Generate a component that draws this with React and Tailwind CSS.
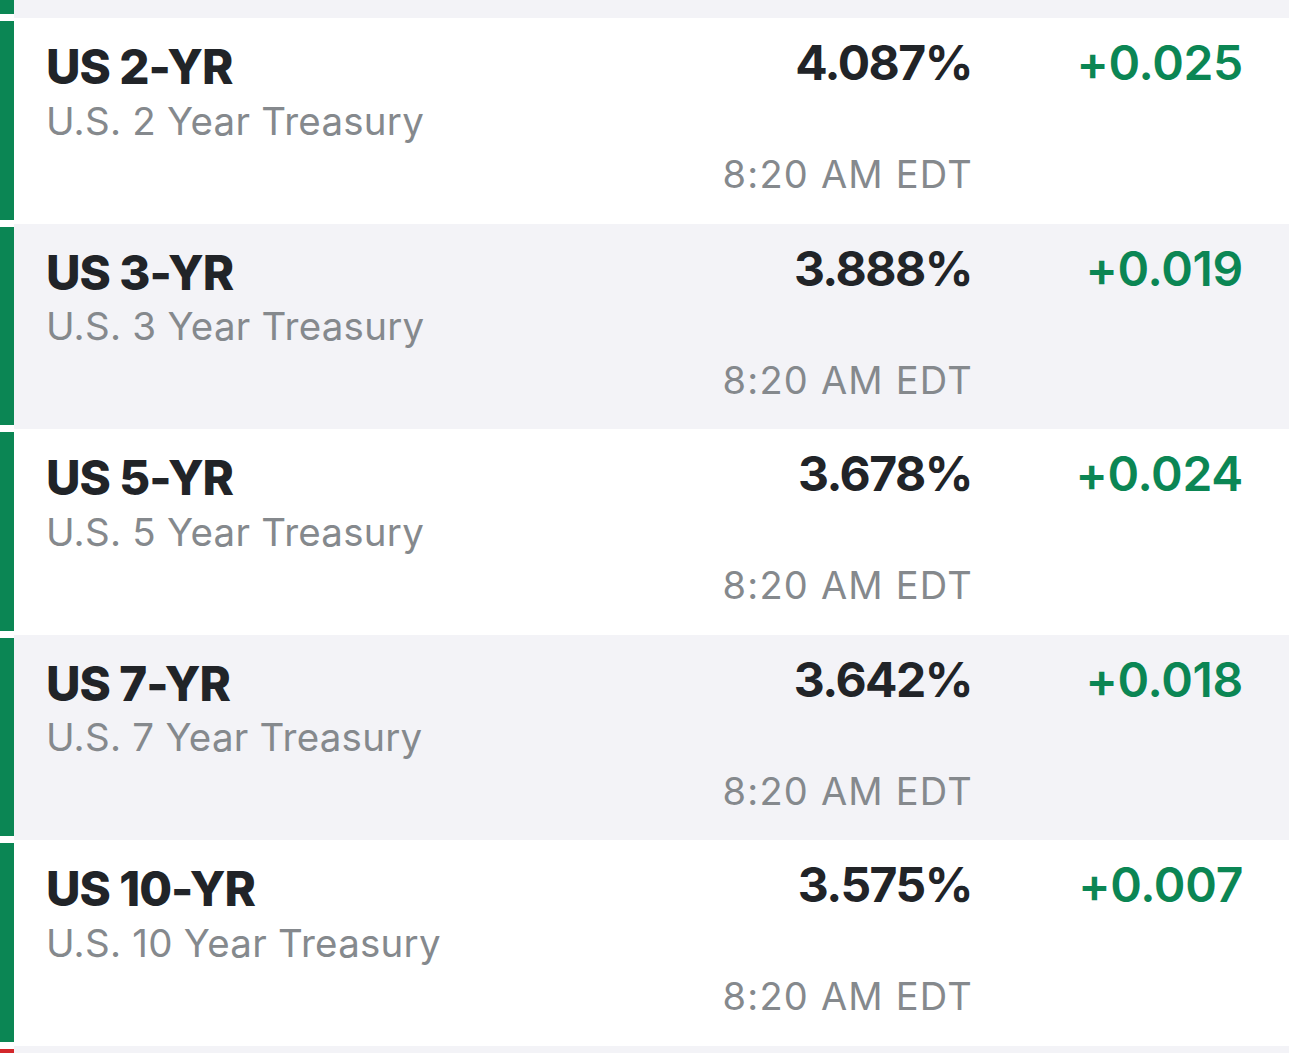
import React from "react";

const rows = [
  { symbol: "US 2-YR", name: "U.S. 2 Year Treasury", yield: "4.087%", change: "+0.025", time: "8:20 AM EDT" },
  { symbol: "US 3-YR", name: "U.S. 3 Year Treasury", yield: "3.888%", change: "+0.019", time: "8:20 AM EDT" },
  { symbol: "US 5-YR", name: "U.S. 5 Year Treasury", yield: "3.678%", change: "+0.024", time: "8:20 AM EDT" },
  { symbol: "US 7-YR", name: "U.S. 7 Year Treasury", yield: "3.642%", change: "+0.018", time: "8:20 AM EDT" },
  { symbol: "US 10-YR", name: "U.S. 10 Year Treasury", yield: "3.575%", change: "+0.007", time: "8:20 AM EDT" },
];

const QuoteRow = ({ item, shaded }) => {
  return (
    <div className="flex h-[205.5px]">
      <div className="w-[14px] shrink-0 pt-[3px] pb-[4px]">
        <div className="h-full bg-[#0b8654]" />
      </div>
      <div
        className={`flex-1 flex pl-[32px] pr-[46px] ${
          shaded ? "bg-[#f3f3f7]" : "bg-white"
        }`}
      >
        <div className="flex-1 pt-[25px]">
          <div className="text-[47.5px] leading-none font-extrabold text-[#212428] tracking-[-1px]">
            {item.symbol}
          </div>
          <div className="mt-[11px] text-[38.5px] leading-none text-[#85898d] tracking-[0.25px]">
            {item.name}
          </div>
        </div>
        <div className="flex flex-col items-end pt-[21px] mr-[-1px]">
          <div className="text-[48px] leading-none font-bold text-[#212428] tracking-[-1.5px]">
            {item.yield}
          </div>
          <div className="mt-[68px] mr-[-1px] text-[38px] leading-none text-[#85898d] tracking-[1.2px]">
            {item.time}
          </div>
        </div>
        <div className="w-[272px] flex justify-end pt-[21px]">
          <div className="text-[48px] leading-none font-semibold text-[#0b8654] tracking-[-0.3px]">
            {item.change}
          </div>
        </div>
      </div>
    </div>
  );
};

export default function App() {
  return (
    <div
      className="w-[1289px] h-[1053px] overflow-hidden bg-white"
      style={{ fontFamily: "Inter, 'Noto Sans', sans-serif" }}
    >
      <div className="flex h-[18px]">
        <div className="w-[14px] shrink-0 pb-[4px]">
          <div className="h-full bg-[#0b8654]" />
        </div>
        <div className="flex-1 bg-[#f3f3f7]" />
      </div>
      {rows.map((item, i) => (
        <QuoteRow key={item.symbol} item={item} shaded={i % 2 === 1} />
      ))}
      <div className="flex h-[40px]">
        <div className="w-[14px] shrink-0 pt-[3px]">
          <div className="h-full bg-[#d3272b]" />
        </div>
        <div className="flex-1 bg-[#f3f3f7]" />
      </div>
    </div>
  );
}
